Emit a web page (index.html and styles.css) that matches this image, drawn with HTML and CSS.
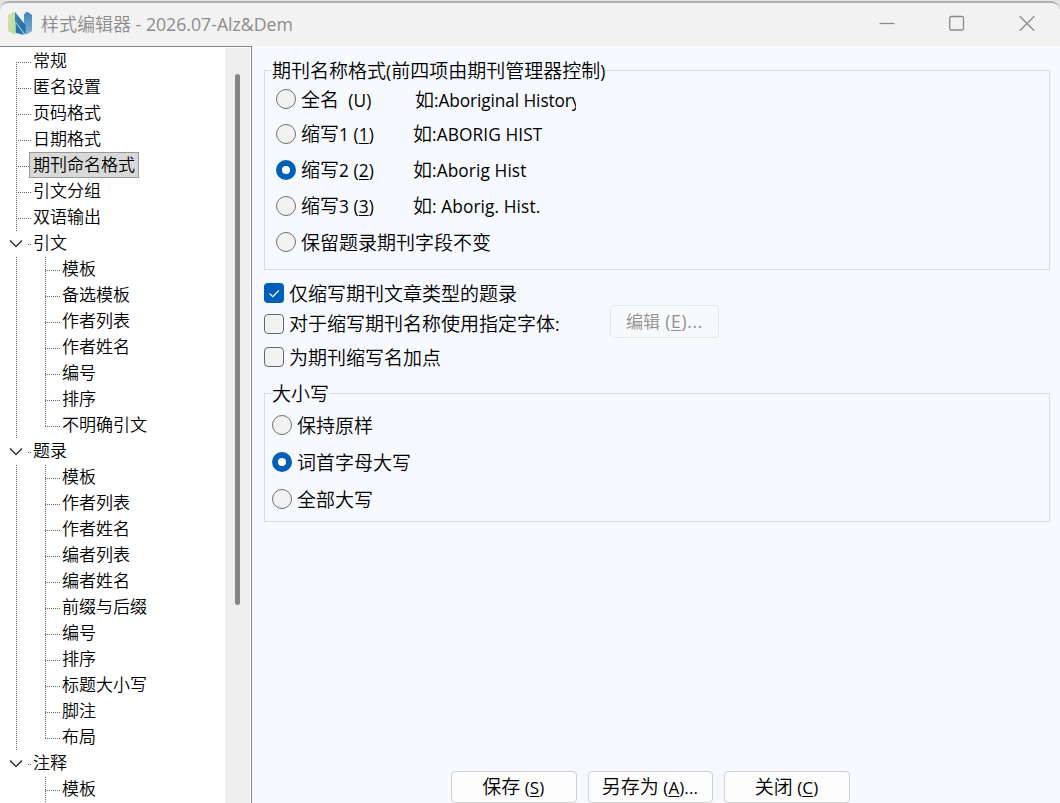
FILE: index.html
```
<!DOCTYPE html>
<html lang="zh-CN">
<head>
<meta charset="utf-8">
<title>样式编辑器</title>
<link rel="stylesheet" href="styles.css">
</head>
<body>
<div class="window">
  <header class="titlebar">
    <svg class="logo" width="24" height="24" viewBox="0 0 24 24">
      <defs>
        <linearGradient id="g1" x1="0" y1="0" x2="1" y2="1"><stop offset="0" stop-color="#cfe3a6"/><stop offset="1" stop-color="#b9dba6"/></linearGradient>
        <linearGradient id="g2" x1="0" y1="0" x2="1" y2="1"><stop offset="0" stop-color="#3f86ae"/><stop offset="1" stop-color="#1f68b0"/></linearGradient>
        <linearGradient id="g3" x1="0" y1="0" x2="0" y2="1"><stop offset="0" stop-color="#3f86bb"/><stop offset="1" stop-color="#7fb0d0"/></linearGradient>
      </defs>
      <path d="M0 4 6 .5 8 2V22L6 23.500 0 20Z" fill="url(#g1)"/>
      <path d="M16 3.500 19 .5 24 4V20L18.500 23.500 16 21Z" fill="url(#g3)"/>
      <path d="M7 1 17.500 14V23.500L7 10Z" fill="url(#g2)"/>
      <path d="M7 10 17.500 23.500H12L7 21Z" fill="#8cc0b8"/>
      <path d="M8 12.500 16 23.500 8 22Z" fill="#2c72b5"/>
    </svg>
    <span class="title">样式编辑器<span class="title-latin"> - 2026.07-Alz&amp;Dem</span></span>
    <div class="controls">
      <svg width="16" height="16" viewBox="0 0 16 16"><path d="M.5 8.500H15.500"/></svg>
      <svg width="16" height="16" viewBox="0 0 16 16"><rect x=".7" y="1.500" width="13.800" height="13.500" rx="1.500"/></svg>
      <svg width="16" height="16" viewBox="0 0 16 16"><path d="M.7 1.200 15.300 15.800M15.300 1.200.7 15.800"/></svg>
    </div>
  </header>
  <div class="body">
    <aside class="sidebar">
      <div class="tree">
        <ul class="group lead">
          <li>常规</li><li>匿名设置</li><li>页码格式</li><li>日期格式</li><li class="selected"><span>期刊命名格式</span></li><li>引文分组</li><li>双语输出</li>
        </ul>
        <div class="parent"><svg class="chev" width="14" height="10" viewBox="0 0 14 10"><path d="M1 1.500 7 7.500 13 1.500"/></svg>引文</div>
        <div class="branch"><ul class="group">
          <li>模板</li><li>备选模板</li><li>作者列表</li><li>作者姓名</li><li>编号</li><li>排序</li><li>不明确引文</li>
        </ul></div>
        <div class="parent"><svg class="chev" width="14" height="10" viewBox="0 0 14 10"><path d="M1 1.500 7 7.500 13 1.500"/></svg>题录</div>
        <div class="branch"><ul class="group">
          <li>模板</li><li>作者列表</li><li>作者姓名</li><li>编者列表</li><li>编者姓名</li><li>前缀与后缀</li><li>编号</li><li>排序</li><li>标题大小写</li><li>脚注</li><li>布局</li>
        </ul></div>
        <div class="parent"><svg class="chev" width="14" height="10" viewBox="0 0 14 10"><path d="M1 1.500 7 7.500 13 1.500"/></svg>注释</div>
        <div class="branch last"><ul class="group open"><li>模板</li></ul></div>
      </div>
      <div class="scrollbar"><div class="thumb"></div></div>
    </aside>
    <main class="pane">
      <fieldset class="names">
        <legend>期刊名称格式<span class="lt">(</span>前四项由期刊管理器控制<span class="lt">)</span></legend>
        <label class="row"><i class="radio"></i><span class="name">全名 <span class="lt key">(U)</span></span><span class="sample clipped">如<span class="lt">:Aboriginal History</span></span></label>
        <label class="row"><i class="radio"></i><span class="name">缩写<span class="lt">1 (<u>1</u>)</span></span><span class="sample">如<span class="lt">:ABORIG HIST</span></span></label>
        <label class="row"><i class="radio on"></i><span class="name">缩写<span class="lt">2 (<u>2</u>)</span></span><span class="sample">如<span class="lt">:Aborig Hist</span></span></label>
        <label class="row"><i class="radio"></i><span class="name">缩写<span class="lt">3 (<u>3</u>)</span></span><span class="sample">如<span class="lt">: Aborig. Hist.</span></span></label>
        <label class="row"><i class="radio"></i><span>保留题录期刊字段不变</span></label>
      </fieldset>
      <div class="checks">
        <label class="row"><i class="check on"><svg width="20" height="20" viewBox="0 0 20 20"><path d="M5.500 10.500 8.800 13.700 14.800 7.500"/></svg></i><span>仅缩写期刊文章类型的题录</span></label>
        <div class="row"><i class="check"></i><span class="font-label">对于缩写期刊名称使用指定字体<span class="lt">:</span></span><button class="edit" disabled>编辑<span class="lt"> (<u>E</u>)...</span></button></div>
        <label class="row"><i class="check"></i><span>为期刊缩写名加点</span></label>
      </div>
      <fieldset class="case">
        <legend>大小写</legend>
        <label class="row"><i class="radio"></i><span>保持原样</span></label>
        <label class="row"><i class="radio on"></i><span>词首字母大写</span></label>
        <label class="row"><i class="radio"></i><span>全部大写</span></label>
      </fieldset>
      <footer class="actions">
        <button>保存<span class="lt"> (<u>S</u>)</span></button>
        <button>另存为<span class="lt"> (<u>A</u>)...</span></button>
        <button>关闭<span class="lt"> (<u>C</u>)</span></button>
      </footer>
    </main>
  </div>
</div>
</body>
</html>
```
FILE: styles.css
```
* { box-sizing: border-box; }
body { margin: 0; background: #e4e4e4; color: #000; font-family: "Noto Sans CJK SC", sans-serif; font-weight: 350; overflow: hidden; }
.window { height: 803px; padding-top: 1px; display: flex; flex-direction: column; }
.titlebar { height: 45px; flex: none; display: flex; align-items: center; padding: 0 25px 3px 8px; background: #f2f2f2; border-top: 2px solid #b0b0b0; border-radius: 9px 9px 0 0; color: #8c8c8c; }
.logo { flex: none; }
.title { margin-left: 9px; font-size: 18px; line-height: 26px; white-space: pre; }
.title-latin { font-family: "Open Sans", sans-serif; font-size: 17.700px; font-weight: 400; }
.controls { margin-left: auto; display: flex; gap: 54px; }
.controls svg { fill: none; stroke: #8a8a8a; stroke-width: 1.300; }
.body { flex: 1; min-height: 0; display: flex; }

.sidebar { width: 252px; flex: none; display: flex; background: #fff; border-top: 1px solid #828790; border-right: 1px solid #828790; padding-right: 1px; overflow: hidden; }
.tree { flex: 1; padding-top: 2px; font-size: 17px; line-height: 22px; }
.group { list-style: none; margin: 0; padding: 0; background: repeating-linear-gradient(#666 0 1px, transparent 1px 2px) 0 0 / 1px calc(100% - 12px) no-repeat; }
.group li { height: 26px; padding-left: 17px; white-space: nowrap; background: repeating-linear-gradient(90deg, #666 0 1px, transparent 1px 2px) 0 13px / 15px 1px no-repeat; }
.group.lead { margin-left: 16px; background-position: 0 13px; }
.group.open { background-size: 1px 100%; }
.group .selected { display: flex; padding-left: 13px; }
.selected span { width: 110px; height: 26px; margin-top: -1px; line-height: 22px; padding: 0 0 0 3px; background: #d9d9d9; border: 1px solid #999; }
.parent { height: 26px; display: flex; padding-left: 9px; background: repeating-linear-gradient(90deg, #666 0 1px, transparent 1px 2px) 28px 13px / 3px 1px no-repeat; }
.chev { margin-right: 10px; margin-top: 8px; fill: none; stroke: #333; stroke-width: 1.500; }
.branch { margin-left: 16px; padding-left: 29px; background: repeating-linear-gradient(#666 0 1px, transparent 1px 2px) 0 0 / 1px 100% no-repeat; }
.branch.last { background: none; }
.scrollbar { width: 25px; margin-top: 1px; padding: 26px 0 0 10px; background: #eee; }
.thumb { width: 5px; height: 531px; border-radius: 3px; background: #858585; }

.pane { flex: 1; display: flex; flex-direction: column; padding: 12px 10px 0 12px; background: #f6f9fe; font-size: 19px; line-height: 24px; }
.lt { font-family: "Open Sans", sans-serif; font-size: 17.300px; font-weight: 400; white-space: pre; letter-spacing: .1px; }
u { text-decoration-thickness: 1px; text-underline-offset: 2px; }
fieldset { margin: 0; min-width: 0; border: 1px solid #d9dcde; }
legend { height: 24px; padding: 0; white-space: nowrap; }
.names { height: 212px; padding: 0 0 0 11px; }
.names legend { margin-left: -4px; }
.row { display: flex; align-items: center; white-space: nowrap; }
.names .row { height: 36px; }
.names .row:nth-of-type(1) { height: 34px; }
.names .row:nth-of-type(2) { height: 36px; }
.radio { flex: none; width: 20px; height: 20px; margin-right: 5px; border: 1px solid #707070; border-radius: 50%; background: #f2f2f2; }
.radio.on { border: 6px solid #005fb8; background: #fff; }
.name { width: 112px; }
.key { margin-left: 5px; }
.clipped { width: 163px; padding-left: 2px; overflow: hidden; }
.clipped .lt { letter-spacing: -.1px; }
.names .row:nth-of-type(1) > span { margin-top: 2px; }
.names .row:nth-of-type(n+2) > span { margin-top: -1px; }
.checks { padding-top: 7px; height: 111px; }
.checks .row { height: 31px; }
.checks .row:last-child { height: 35px; }
.check { flex: none; width: 20px; height: 20px; margin-right: 5px; border: 1px solid #666; border-radius: 4px; background: #f2f2f2; }
.check.on { border: 0; background: #005fb8; }
.check svg { display: block; fill: none; stroke: #fff; stroke-width: 1.100; }
.font-label { width: 321px; }
button { height: 33px; padding: 0; border: 1px solid #d0d0d0; border-radius: 4px; background: #fdfdfd; color: #000; font: 350 19px/24px "Noto Sans CJK SC", sans-serif; white-space: nowrap; }
.edit { width: 109px; margin-bottom: 5px; font-size: 17px; color: #8f8f8f; background: #f8f9fa; border-color: #e5e7e9; }
.edit .lt { letter-spacing: .7px; }
.case { height: 141px; padding: 1px 0 0 7px; }
.case .row { height: 37px; }
.actions { margin: auto 0 0 187px; display: flex; gap: 11px; }
.actions button { width: 125.600px; height: 32px; padding-right: 1px; }
.actions .lt { font-size: 17px; }
```
